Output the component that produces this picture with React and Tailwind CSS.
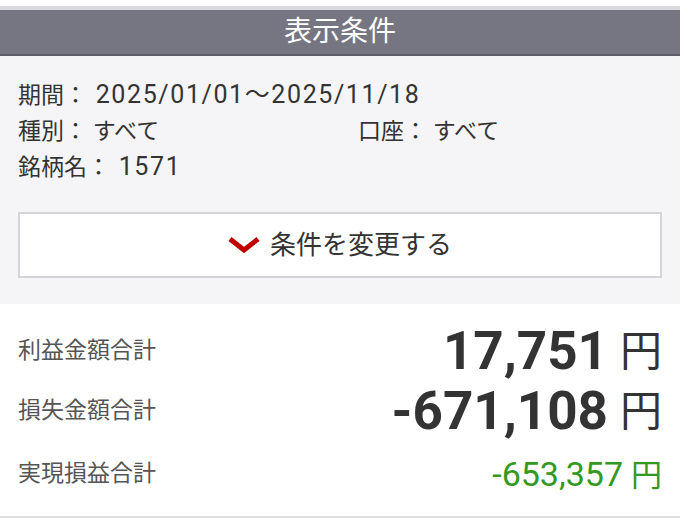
const jp = { fontFamily: 'Roboto, "Noto Sans CJK JP", sans-serif' }

const Num = ({ children }) => <span className="text-[25px] leading-[20px] tracking-[1.6px] ml-[3px]">{children}</span>

const Row = ({ label, children, className }) => (
  <div className={`flex items-center justify-between ${className}`}>
    <span className="text-[23px] text-[#555]" style={jp}>
      {label}
    </span>
    <div className="flex items-baseline">{children}</div>
  </div>
)

export default function App() {
  return (
    <div className="w-[680px] h-[526px] bg-white overflow-hidden" style={jp}>
      <div className="h-[6px] bg-white" />
      <div className="h-[4px] bg-[#d9d9dd]" />
      <div className="h-[44px] bg-[#767682] flex items-center justify-center text-white text-[28px] leading-none">
        表示条件
      </div>
      <div className="h-[2px] bg-[#5e5e69]" />

      {/* conditions */}
      <div className="bg-[#f5f5f7] px-[18px] pt-[22px] pb-[26px]">
        <div className="text-[23px] leading-[36px] text-[#333]">
          <div className="h-[36px]">
            期間： <Num>2025/01/01～2025/11/18</Num>
          </div>
          <div className="flex h-[36px]">
            <span className="w-[340px]">種別： すべて</span>
            <span>口座： すべて</span>
          </div>
          <div className="h-[36px]">
            銘柄名： <Num>1571</Num>
          </div>
        </div>
        <button className="mt-[26px] w-full h-[66px] bg-white border-2 border-[#d4d4d6] flex items-center justify-center gap-[10px]">
          <svg width="32" height="18" viewBox="0 0 32 18">
            <polyline points="2,3 16,14 30,3" fill="none" stroke="#c00000" strokeWidth="5" />
          </svg>
          <span className="text-[26px] text-[#333]">条件を変更する</span>
        </button>
      </div>

      {/* totals */}
      <div className="px-[18px] pt-[17px] pb-[9px] border-b-2 border-[#dcdcdc]">
        <Row label="利益金額合計" className="h-[60px]">
          <span className="text-[53px] font-bold text-[#333] leading-none">17,751</span>
          <span className="relative -top-[3px] ml-[12px] text-[42px] text-[#333] leading-none">円</span>
        </Row>
        <Row label="損失金額合計" className="h-[60px]">
          <span className="text-[53px] font-bold text-[#333] leading-none">-671,108</span>
          <span className="relative -top-[3px] ml-[12px] text-[42px] text-[#333] leading-none">円</span>
        </Row>
        <Row label="実現損益合計" className="h-[66px]">
          <span className="text-[34px] text-[#339922] leading-none">-653,357</span>
          <span className="ml-[8px] text-[31px] text-[#339922] leading-none">円</span>
        </Row>
      </div>
    </div>
  )
}
